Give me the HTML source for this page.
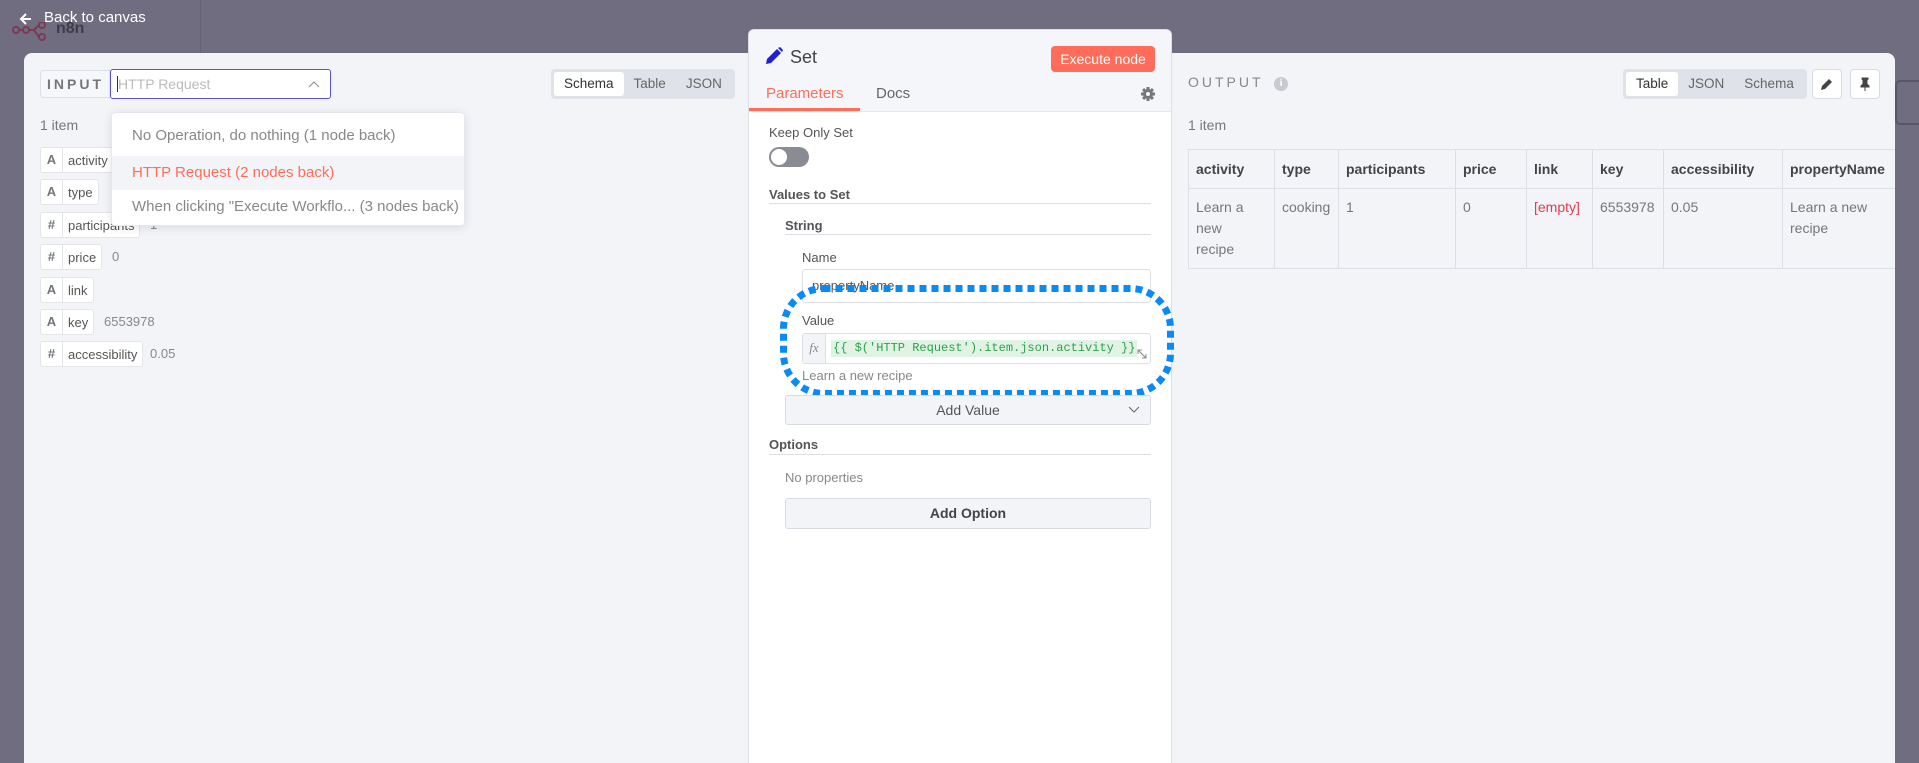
<!DOCTYPE html>
<html><head><meta charset="utf-8"><style>
*{box-sizing:border-box;margin:0;padding:0}
html{width:1919px;height:763px;overflow:hidden}
body{width:1919px;height:763px;overflow:hidden;background:#716d80;font-family:"Liberation Sans",sans-serif;position:relative;color:#555}
.a{position:absolute}
.pill{position:absolute;left:40px;height:26px;border:1px solid #e4e5ea;border-radius:3px;background:#fff;font-size:13px;color:#555;display:flex;align-items:center}
.pill b{font-weight:bold;color:#777;width:22px;text-align:center;border-right:1px solid #e4e5ea;height:100%;line-height:24px;font-size:13px}
.pill span{padding:0 5px}
.val{position:absolute;font-size:13px;color:#888}
.tabs{position:absolute;background:#dfe2e8;border-radius:4px;display:flex;padding:3px;font-size:13.5px;color:#666;height:30px}
.tabs div{padding:0 10px;line-height:24px;border-radius:3px}
.tabs .on{background:#fff;color:#333}
.sec{position:absolute;font-size:13px;font-weight:bold;color:#555;border-bottom:1px solid #dcdfe6}
table{border-collapse:collapse;font-size:14px}
td,th{border:1px solid #dcdfe6;padding:0 7px;vertical-align:top;text-align:left}
th{height:39px;vertical-align:middle;color:#444}
td{color:#777;line-height:21px;padding-top:8px;height:80px}
</style></head><body>
<div class="a" style="left:200px;top:0;width:1px;height:53px;background:#666276"></div>
<svg class="a" style="left:12px;top:22px" width="40" height="20"><g fill="none" stroke="#7a3a55" stroke-width="2"><circle cx="4" cy="8" r="3"/><circle cx="14" cy="8" r="3"/><circle cx="30" cy="3" r="3"/><circle cx="30" cy="15" r="3"/><path d="M7 8h4M17 8h5l5-5M22 8l5 7"/></g></svg>
<div class="a" style="left:56px;top:20px;font-size:16px;font-weight:bold;color:#3e3b4a">n8n</div>
<svg class="a" style="left:19px;top:12px" width="14" height="14"><path d="M12 7H2M7 2L2 7l5 5" stroke="#fff" stroke-width="2" fill="none"/></svg>
<div class="a" style="left:44px;top:9px;font-size:15px;color:#fff">Back to canvas</div>
<div class="a" style="left:1895px;top:80px;width:30px;height:45px;border:2px solid #5a566a;border-radius:5px"></div>

<div class="a" style="left:24px;top:53px;width:1871px;height:710px;background:#f3f4f8;border-radius:8px 8px 0 0"></div>
<!-- input -->
<div class="a" style="left:40px;top:70px;width:70px;height:28px;border:1px solid #dcdfe6;border-radius:4px 0 0 4px;background:#f6f7fa;font-size:14px;letter-spacing:3px;color:#777;line-height:26px;padding-left:6px;font-weight:bold">INPUT</div>
<div class="a" style="left:110px;top:69px;width:221px;height:30px;border:1px solid #5b4fd6;border-radius:3px;background:#fff;font-size:14px;color:#bbb;line-height:28px;padding-left:7px">HTTP Request<span style="position:absolute;left:6px;top:6px;width:1px;height:16px;background:#333"></span><svg style="position:absolute;right:10px;top:10px" width="12" height="8"><path d="M1 7l5-5 5 5" stroke="#888" fill="none"/></svg></div>
<div class="tabs" style="left:551px;top:69px"><div class="on">Schema</div><div>Table</div><div>JSON</div></div>
<div class="a" style="left:40px;top:117px;font-size:14px;color:#777">1 item</div>
<div class="pill" style="top:147px"><b>A</b><span>activity</span></div>
<div class="pill" style="top:179px"><b>A</b><span>type</span></div>
<div class="pill" style="top:212px"><b>#</b><span>participants</span></div><div class="val" style="left:150px;top:217px">1</div>
<div class="pill" style="top:244px"><b>#</b><span>price</span></div><div class="val" style="left:112px;top:249px">0</div>
<div class="pill" style="top:277px"><b>A</b><span>link</span></div>
<div class="pill" style="top:309px"><b>A</b><span>key</span></div><div class="val" style="left:104px;top:314px">6553978</div>
<div class="pill" style="top:341px"><b>#</b><span>accessibility</span></div><div class="val" style="left:150px;top:346px">0.05</div>
<div class="a" style="left:111px;top:112px;width:354px;height:114px;background:#fff;border:1px solid #e4e7ed;border-radius:4px;box-shadow:0 2px 10px rgba(0,0,0,.1);font-size:15px;color:#888">
<div style="height:40px;line-height:40px;padding-left:20px;margin-top:3px">No Operation, do nothing (1 node back)</div>
<div style="height:34px;line-height:34px;padding-left:20px;background:#f3f4f7;color:#ff6d5a">HTTP Request (2 nodes back)</div>
<div style="height:34px;line-height:34px;padding-left:20px">When clicking "Execute Workflo... (3 nodes back)</div></div>

<!-- center -->
<div class="a" style="left:748px;top:29px;width:424px;height:734px;background:#fff;border-radius:6px 6px 0 0;border:1px solid #dcdfe6;border-bottom:none;overflow:hidden">
<div style="height:82px;background:#f5f6f9;border-bottom:1px solid #e4e7ed"></div></div>
<svg class="a" style="left:764px;top:46px" width="20" height="20"><path d="M2 18l1-5L13 3l4 4L7 17z" fill="#1f1fd6"/><path d="M14 2l2-1 3 3-1 2z" fill="#1f1fd6"/></svg>
<div class="a" style="left:790px;top:47px;font-size:18px;color:#444">Set</div>
<div class="a" style="left:1051px;top:46px;width:104px;height:26px;background:#ff6d5a;border-radius:4px;color:#fff;font-size:14px;text-align:center;line-height:26px">Execute node</div>
<div class="a" style="left:766px;top:85px;font-size:15px;color:#ff6d5a">Parameters</div>
<div class="a" style="left:749px;top:108px;width:111px;height:3px;background:#ff6d5a"></div>
<div class="a" style="left:876px;top:85px;font-size:15px;color:#666">Docs</div>
<svg class="a" style="left:1141px;top:87px" width="14" height="14"><g fill="#777"><circle cx="7" cy="7" r="5"/><rect x="5.5" y="0" width="3" height="14"/><rect x="0" y="5.5" width="14" height="3"/><rect x="5.5" y="0" width="3" height="14" transform="rotate(45 7 7)"/><rect x="5.5" y="0" width="3" height="14" transform="rotate(-45 7 7)"/></g><circle cx="7" cy="7" r="2" fill="#f5f6f9"/></svg>
<div class="a" style="left:769px;top:125px;font-size:13px;color:#555">Keep Only Set</div>
<div class="a" style="left:769px;top:147px;width:40px;height:20px;border-radius:10px;background:#8a8c94"><div style="position:absolute;left:2px;top:2px;width:16px;height:16px;border-radius:50%;background:#fff"></div></div>
<div class="sec" style="left:769px;top:187px;width:382px;height:17px">Values to Set</div>
<div class="sec" style="left:785px;top:218px;width:366px;height:17px">String</div>
<div class="a" style="left:802px;top:250px;font-size:13px;color:#555">Name</div>
<div class="a" style="left:802px;top:269px;width:349px;height:34px;border:1px solid #dcdfe6;border-radius:3px;font-size:13px;color:#555;line-height:32px;padding-left:9px">propertyName</div>
<div class="a" style="left:802px;top:313px;font-size:13px;color:#555">Value</div>
<div class="a" style="left:802px;top:333px;width:349px;height:31px;border:1px solid #dcdfe6;border-radius:3px;overflow:hidden;white-space:nowrap"><div style="position:absolute;left:0;top:0;width:23px;height:100%;background:#f3f4f8;border-right:1px solid #dcdfe6;font-style:italic;font-family:'Liberation Serif',serif;font-size:13px;color:#888;text-align:center;line-height:28px">fx</div><div style="position:absolute;left:28px;top:6px;background:#e1f3e5;color:#2aa24a;font-family:'Liberation Mono',monospace;font-size:12px;line-height:17px;padding:0 2px">{{ $('HTTP Request').item.json.activity }}</div><svg style="position:absolute;right:2px;top:14px" width="12" height="12"><path d="M2 2l8 8M2 6V2h4M10 6v4H6" stroke="#888" fill="none"/></svg></div>
<div class="a" style="left:802px;top:368px;font-size:13px;color:#888">Learn a new recipe</div>
<svg class="a" style="left:780px;top:285px" width="394" height="112"><rect x="3.5" y="3.5" width="387" height="105" rx="40" fill="none" stroke="#0b8af5" stroke-width="7" stroke-dasharray="7 5"/></svg>
<div class="a" style="left:785px;top:395px;width:366px;height:30px;border:1px solid #d8dbe2;border-radius:3px;background:#f3f4f8;font-size:14px;color:#555;text-align:center;line-height:28px">Add Value<svg style="position:absolute;right:10px;top:10px" width="12" height="8"><path d="M1 1l5 5 5-5" stroke="#666" fill="none"/></svg></div>
<div class="sec" style="left:769px;top:437px;width:382px;height:18px">Options</div>
<div class="a" style="left:785px;top:470px;font-size:13px;color:#888">No properties</div>
<div class="a" style="left:785px;top:498px;width:366px;height:31px;border:1px solid #d8dbe2;border-radius:3px;background:#f3f4f8;font-size:14px;color:#444;text-align:center;line-height:29px;font-weight:bold">Add Option</div>

<!-- output -->
<div class="a" style="left:1188px;top:74px;font-size:14px;letter-spacing:3px;color:#888">OUTPUT</div>
<div class="a" style="left:1274px;top:77px;width:14px;height:14px;border-radius:50%;background:#c8cad0;color:#fff;font-size:10px;text-align:center;line-height:14px;font-weight:bold">i</div>
<div class="tabs" style="left:1623px;top:69px"><div class="on">Table</div><div>JSON</div><div>Schema</div></div>
<div class="a" style="left:1812px;top:69px;width:30px;height:30px;border:1px solid #d8dbe2;border-radius:4px;background:#fff"><svg style="margin:7px" width="14" height="14"><path d="M1 13l1-4 7-7 3 3-7 7z" fill="#444"/></svg></div>
<div class="a" style="left:1850px;top:69px;width:30px;height:30px;border:1px solid #d8dbe2;border-radius:4px;background:#fff"><svg style="margin:7px" width="14" height="14"><path d="M4 1h6v1l-1 1v4l2 2v1H3V9l2-2V3L4 2zM7 10v4" fill="#444" stroke="#444"/></svg></div>
<div class="a" style="left:1188px;top:117px;font-size:14px;color:#777">1 item</div>
<div class="a" style="left:1188px;top:149px;width:707px;overflow:hidden"><table style="width:720px;table-layout:fixed"><tr><th style="width:86px">activity</th><th style="width:64px">type</th><th style="width:117px">participants</th><th style="width:71px">price</th><th style="width:66px">link</th><th style="width:71px">key</th><th style="width:119px">accessibility</th><th>propertyName</th></tr>
<tr><td>Learn a<br>new<br>recipe</td><td>cooking</td><td>1</td><td>0</td><td style="color:#e23c4c">[empty]</td><td>6553978</td><td>0.05</td><td>Learn a new recipe</td></tr></table></div>
</body></html>
